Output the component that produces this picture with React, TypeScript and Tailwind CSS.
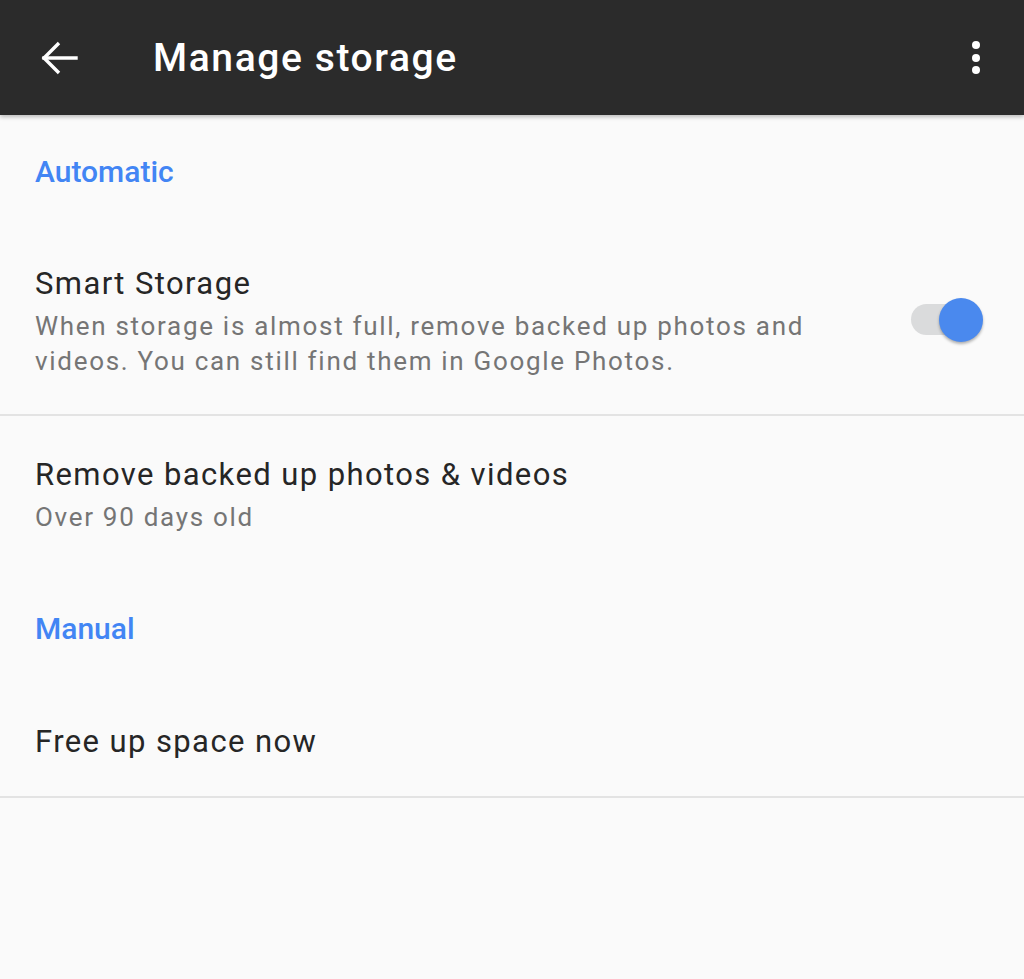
import React from "react";

export default function App() {
  return (
    <div className="w-[1024px] h-[979px] bg-[#fafafa] overflow-hidden" style={{ fontFamily: "Roboto, 'Noto Sans', sans-serif" }}>
      <div className="relative z-10 h-[115px] bg-[#2b2b2b] flex items-center shadow-[0_2px_4px_rgba(0,0,0,0.25)]">
        <div className="w-[153px] flex items-center pl-[41px]">
          <svg width="38" height="36" viewBox="0 0 38 36" fill="none" stroke="#fff" strokeWidth="3.4" strokeLinecap="square">
            <path d="M3 18H35" />
            <path d="M18 3L3 18L18 33" strokeLinecap="butt" />
          </svg>
        </div>
        <div className="flex-1 text-white text-[39px] leading-[44px] font-medium tracking-[1.6px]">Manage storage</div>
        <div className="w-[94px] flex flex-col items-center gap-[4.5px] pr-[2px]">
          <span className="w-[8px] h-[8px] rounded-full bg-white" />
          <span className="w-[8px] h-[8px] rounded-full bg-white" />
          <span className="w-[8px] h-[8px] rounded-full bg-white" />
        </div>
      </div>

      <div className="pl-[35px] pt-[42px] text-[30px] leading-[30px] font-medium text-[#4285f4]">Automatic</div>

      <div className="flex items-center pl-[35px] pt-[77px] pb-[35px] border-b-2 border-[#e3e3e3]">
        <div className="flex-1">
          <div className="text-[31px] leading-[40px] text-[#262626] tracking-[1.4px]">Smart Storage</div>
          <div className="mt-[5px] text-[26px] leading-[35px] text-[#757575] tracking-[1.7px]">
            When storage is almost full, remove backed up photos and
            <br />
            videos. You can still find them in Google Photos.
          </div>
        </div>
        <div className="relative w-[72px] h-[44px] mr-[41px] mb-[4px] flex items-center">
          <div className="absolute left-0 w-[62px] h-[31px] rounded-full bg-[#dadbdc]" />
          <div className="absolute right-0 w-[44px] h-[44px] rounded-full bg-[#4a89ee] shadow-[0_2px_3px_rgba(0,0,0,0.3)]" />
        </div>
      </div>

      <div className="pl-[35px] pt-[39px]">
        <div className="text-[31px] leading-[40px] text-[#262626] tracking-[1.4px]">Remove backed up photos &amp; videos</div>
        <div className="mt-[5px] text-[26px] leading-[35px] text-[#757575] tracking-[1.7px]">Over 90 days old</div>
      </div>

      <div className="pl-[35px] pt-[79px] text-[30px] leading-[30px] font-medium text-[#4285f4]">Manual</div>

      <div className="pl-[35px] pt-[78px] pb-[34px] border-b-2 border-[#e3e3e3]">
        <div className="text-[31px] leading-[40px] text-[#262626] tracking-[1.4px]">Free up space now</div>
      </div>
    </div>
  );
}
